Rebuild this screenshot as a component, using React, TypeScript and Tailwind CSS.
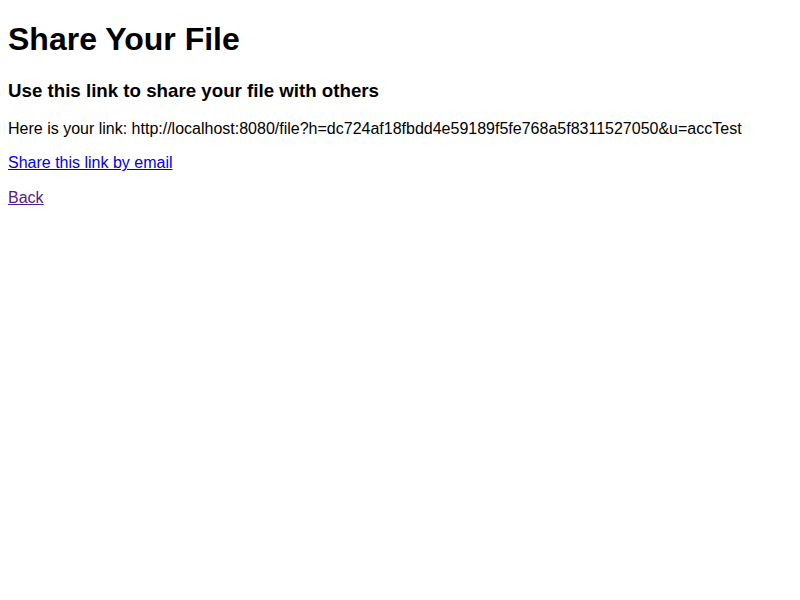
export default function App() {
  return (
    <div className="m-2 text-base text-black bg-white" style={{ fontFamily: '"Liberation Sans", Arial, sans-serif' }}>
      <h1 className="text-[32px] font-bold leading-[36.8px] my-[21.44px]">Share Your File</h1>
      <h3 className="text-[18.72px] font-bold leading-[21.5px] my-[18.72px]">Use this link to share your file with others</h3>
      <p className="my-4 leading-[18.4px]">
        Here is your link: http://localhost:8080/file?h=dc724af18fbdd4e59189f5fe768a5f8311527050&amp;u=accTest
      </p>
      <p className="my-4 leading-[18.4px]">
        <a href="#share" className="text-[#0000EE] underline">Share this link by email</a>
      </p>
      <p className="my-4 leading-[18.4px]">
        <a href="#back" className="text-[#551A8B] underline">Back</a>
      </p>
    </div>
  );
}
